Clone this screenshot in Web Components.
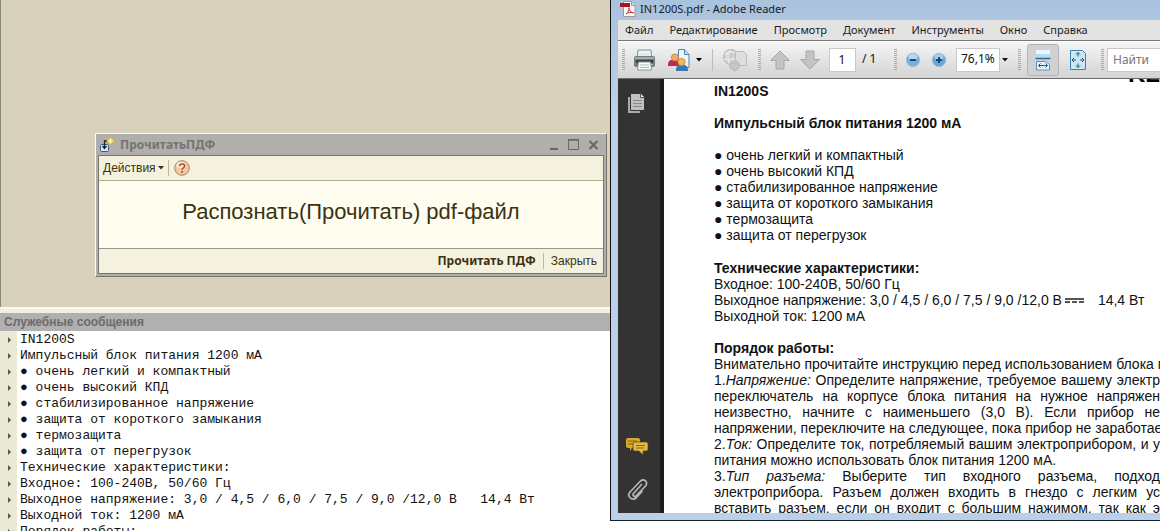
<!DOCTYPE html>
<html lang="ru">
<head>
<meta charset="utf-8">
<title>Прочитать ПДФ</title>
<style>
  html, body { margin: 0; height: 100%; overflow: hidden; background: #fff; }
  body { font-family: "Liberation Sans", Arial, sans-serif; color: #111; }
</style>
</head>
<body>
<split-desktop>
  <onec-app slot="left"></onec-app>
  <reader-window slot="right"></reader-window>
</split-desktop>

<script>
const define = (name, css, html, setup) => {
  const tpl = document.createElement('template');
  tpl.innerHTML = `<style>*{box-sizing:border-box}${css}</style>${html}`;
  customElements.define(name, class extends HTMLElement {
    constructor() {
      super();
      this.attachShadow({ mode: 'open' }).append(tpl.content.cloneNode(true));
    }
    connectedCallback() { if (setup) setup(this, this.shadowRoot); }
  });
};

const ICONS = {
  form: [16, 16, `<rect x="1.5" y="7.500" width="8" height="7" rx="1" fill="#d7e7f6" stroke="#2f5f92"/><path d="M9 4H5.500v7M3.500 9l2 2.500 2-2.500" fill="none" stroke="#222" stroke-width="1.300"/><path d="M11.500 0L15.500 4l-4 4-4-4z" fill="#f4dc4c" stroke="#c9a92c" stroke-width=".7"/><path d="M11.500 2v4M9.500 4h4" stroke="#fff8bb"/>`],
  help: [16, 16, `<circle cx="8" cy="8" r="7.300" fill="#f5c79b" stroke="#a98468"/><ellipse cx="7" cy="5" rx="4.500" ry="3.200" fill="#fde8cf"/><path d="M5.600 6.200c0-3.200 5-3 5-.2 0 1.700-2.500 1.800-2.500 3.800" fill="none" stroke="#8c4f2c" stroke-width="1.400"/><rect x="7.200" y="11" width="1.700" height="1.700" fill="#8c4f2c"/>`],
  min: [12, 12, `<path d="M2 10h8" stroke="#666" stroke-width="2"/>`],
  max: [12, 12, `<path d="M.5.5h10v10H.5z" fill="none" stroke="#666"/><path d="M0 1h11" stroke="#666" stroke-width="1.500"/>`],
  close: [12, 12, `<path d="M1.500 2l8 8M9.500 2l-8 8" stroke="#666" stroke-width="2"/>`],
  caret: [6, 4, `<path d="M0 0h6L3 3.500z" fill="currentColor"/>`],
  pdf: [16, 16, `<path d="M3.500.5h8l3.500 4v11H3.500z" fill="#fafafa" stroke="#999"/><path d="M11.500.5v4H15" fill="#ddd" stroke="#999"/><path d="M0 2h10v4H0z" fill="#a8141c"/><path d="M6 13c2-1.500 3.500-4.500 3-6.500M9 7.500c.5 2.500 2 4 4.500 4.300M6 13c1.500-1.500 5-2 7.500-1.200" fill="none" stroke="#cf2b2b"/>`],
  printer: [24, 24, `<path d="M5 2h13l1 8H4z" fill="#dcebee" stroke="#8b9498"/><path d="M6 4h11" stroke="#fff"/><rect x="1" y="8" width="21" height="11" rx="2" fill="#727b80"/><path d="M2 10h19" stroke="#a4adb0" stroke-width="2"/><rect x="3" y="12" width="17" height="3" fill="#394045"/><path d="M5.500 14h12l1 8h-14z" fill="#fafcfc" stroke="#8b9498"/><path d="M7 17h9M7 19.500h9" stroke="#aeb6b9"/><rect x="18" y="16" width="2" height="1" fill="#8fe08a"/>`],
  people: [24, 24, `<path d="M11.500 1.500h6l4.500 5v13H11.500z" fill="#eef6fd" stroke="#4387bf"/><path d="M17.500 1.500v5H22" fill="#b8d9f2" stroke="#4387bf"/><path d="M1 18c0-6 2-6 5.500-6s5.500 0 5.500 6z" fill="#c5264a"/><circle cx="8" cy="9.500" r="3.600" fill="#f0a96a" stroke="#b9713b" stroke-width=".7"/><path d="M9 23c0-6 2.500-6 6-6s6 0 6 6z" fill="#3578b8"/><circle cx="14.500" cy="14" r="3.700" fill="#f2b95a" stroke="#b97b2b" stroke-width=".7"/>`],
  globe: [26, 24, `<circle cx="9" cy="9" r="7.500" fill="#cdcdcd" stroke="#b3b3b3"/><path d="M3 7c3-4 8-3 11-2M2 11c4 1 8 1 12-1M8 2c-3 5-3 9 0 14" fill="none" stroke="#e9e9e9" stroke-width="1.500"/><path d="M13.500 3.500h8l3 3v11h-11z" fill="#dedede" stroke="#bbb"/><path d="M8 15h4l2-2 3 2v5l-4 3-5-3z" fill="#c6c6c6" stroke="#b5b5b5"/>`],
  up: [22, 22, `<path d="M11 2l9.500 9.500H15V20H7v-8.500H1.500z" fill="#c3c4c5" stroke="#a5a6a7"/>`],
  down: [22, 22, `<path d="M11 20l9.500-9.500H15V2H7v8.500H1.500z" fill="#c3c4c5" stroke="#a5a6a7"/>`],
  minus: [16, 16, `<circle cx="8" cy="8" r="6.700" fill="#72b3de" stroke="#a9bccb"/><ellipse cx="8" cy="5" rx="4.500" ry="3" fill="#b4daf1"/><path d="M5 8h6" stroke="#164a78" stroke-width="2"/>`],
  plus: [16, 16, `<circle cx="8" cy="8" r="6.700" fill="#62a9da" stroke="#a9bccb"/><ellipse cx="8" cy="5" rx="4.500" ry="3" fill="#a4d0ec"/><path d="M5 8h6M8 5v6" stroke="#164a78" stroke-width="2"/>`],
  width: [18, 22, `<path d="M2 1h14v8H2z" fill="#eaf6fd"/><path d="M2 5h14v4H2z" fill="#b8dcf0"/><path d="M1.500 9.500h15" stroke="#2f6c9a" stroke-width="1.500"/><path d="M2.500 21V12.500h9l4 3V21z" fill="#e3f2fb" stroke="#5e93b8"/><path d="M4.500 16.500h9M6.500 14.500l-2 2 2 2M11.500 14.500l2 2-2 2" fill="none" stroke="#23587f"/>`],
  fit: [18, 22, `<path d="M1.500 1.500h12l3 3v16h-15z" fill="#cce6f5" stroke="#3e83b3"/><path d="M9 3.500v4M7 5.500l2-2 2 2M9 18.500v-4M7 16.500l2 2 2-2M3 11h4M5 9l-2 2 2 2M15 11h-4M13 9l2 2-2 2" fill="none" stroke="#23587f"/>`],
  pages: [20, 22, `<path d="M1 5h10v16H1z" fill="#a9abab"/><path d="M1 5h3v14h9v2H1z" fill="#a9abab"/><path d="M3.500 1.500h10l4 4v13h-14z" fill="#bfc1c1" stroke="#333"/><path d="M13.500 1.500v4h4" fill="#eee" stroke="#555"/><path d="M6 8.500h9M6 11.500h9M6 14.500h9" stroke="#8a8a8a"/>`],
  notes: [24, 20, `<path d="M3 1h10q2 0 2 2v6q0 2-2 2H7l-2 3v-3H3q-2 0-2-2V3q0-2 2-2z" fill="#d9a829"/><path d="M3 4h9M3 7h5" stroke="#87640f"/><path d="M10 5h11q2 0 2 2v5q0 2-2 2h-3v4l-4-4h-4q-2 0-2-2V7q0-2 2-2z" fill="#e3bb48" stroke="#5f4b18" stroke-width=".8"/><path d="M11 8.500h9M11 11h8" stroke="#87640f"/>`],
  clip: [22, 24, `<path d="M16 7L7.500 16.500c-1.500 2 1 4 3 2L19.500 9c3-4-1.500-8-5-5L4 15c-3.500 4.500 2 9.500 6.500 5.500l6-6.500" fill="none" stroke="#b5b7b7" stroke-width="1.700"/>`]
};

define('ui-icon', `:host{display:inline-flex;flex:none} svg{display:block}`, ``, (el, root) => {
  const [w, h, body] = ICONS[el.getAttribute('name')];
  const box = document.createElement('div');
  box.innerHTML = `<svg aria-hidden="true" width="${w}" height="${h}" viewBox="0 0 ${w} ${h}">${body}</svg>`;
  root.append(box.firstChild);
});

define('split-desktop', `
  :host{display:grid;grid-template-columns:61fr 55fr;height:100vh;overflow:hidden;background:#fff}
  .cell{min-width:0;min-height:0;display:grid}
`, `<div class="cell"><slot name="left"></slot></div><div class="cell"><slot name="right"></slot></div>`);

define('onec-dialog', `
  :host{display:block;border:1px solid #fbfaf0;border-right-color:#77746c;border-bottom-color:#77746c;background:#b0afad;padding:0 2px 2px 2px;color:#3b3210;font-family:"Liberation Sans",Arial,sans-serif}
  header{display:flex;align-items:center;height:21px;gap:5px;padding:0 4px 0 1px}
  h1{flex:1;margin:0;font:bold 12px/20px "Noto Sans",sans-serif;color:#75746f}
  button{border:0;background:none;padding:0;margin:0;display:inline-flex;align-items:center;color:inherit;font:12px/20px "Liberation Sans",Arial,sans-serif}
  .win{display:flex;gap:8px}
  .body{border:1px solid #77746c}
  .bar{display:flex;align-items:center;height:24px;padding:0 4px;background:#f4f1df}
  .bar button{gap:2px}
  .bar i,footer i{width:1px;height:16px;background:#bdb89c}
  .bar i{margin:0 5px 0 4px}
  .main{height:69px;border-top:1px solid #b1ad97;border-bottom:1px solid #9a9788;background:#fffcf0;text-align:center;font-size:22px;line-height:62px;margin:0}
  footer{display:flex;align-items:center;justify-content:flex-end;gap:7px;height:24px;padding:0 6px;background:#f4f1df}
  footer .default{font:bold 12px/20px "Noto Sans",sans-serif}
`, `
  <header><ui-icon name="form"></ui-icon><h1>ПрочитатьПДФ</h1>
    <div class="win">
      <button aria-label="Свернуть"><ui-icon name="min"></ui-icon></button>
      <button aria-label="Развернуть"><ui-icon name="max"></ui-icon></button>
      <button aria-label="Закрыть окно"><ui-icon name="close"></ui-icon></button>
    </div></header>
  <div class="body">
    <div class="bar"><button>Действия<ui-icon name="caret"></ui-icon></button><i></i><button aria-label="Справка"><ui-icon name="help"></ui-icon></button></div>
    <p class="main">Распознать(Прочитать) pdf-файл</p>
    <footer><button class="default">Прочитать ПДФ</button><i></i><button>Закрыть</button></footer>
  </div>`);

define('message-log', `
  :host{display:flex;flex-direction:column;min-height:0;overflow:hidden;border-top:2px solid #fbf9ee;background:#fff}
  h2{flex:none;margin:0;border-top:4px solid #f3efdf;background:#b1afb0;color:#6c6b6b;font:bold 12px/18px "Liberation Sans",Arial,sans-serif;padding:0 4px}
  ul{flex:1;margin:0;padding:1px 0 0;list-style:none;background:linear-gradient(90deg,#ece8d6 17px,#fff 17px);font:13px/16px "Liberation Mono","Courier New",monospace;color:#111;white-space:pre}
  li{display:flex;align-items:center;height:16px}
  li::before{content:"";flex:none;width:0;height:0;margin:0 9px 0 8px;border:3px solid transparent;border-left-color:#555;border-right-width:0}
`, `<h2>Служебные сообщения</h2><ul></ul>`, (el, root) => {
  const lines = ['IN1200S', 'Импульсный блок питания 1200 мА', '● очень легкий и компактный', '● очень высокий КПД',
    '● стабилизированное напряжение', '● защита от короткого замыкания', '● термозащита', '● защита от перегрузок',
    'Технические характеристики:', 'Входное: 100-240В, 50/60 Гц',
    'Выходное напряжение: 3,0 / 4,5 / 6,0 / 7,5 / 9,0 /12,0 В   14,4 Вт', 'Выходной ток: 1200 мА', 'Порядок работы:'];
  root.querySelector('ul').replaceChildren(...lines.map(t => Object.assign(document.createElement('li'), { textContent: t })));
});

define('onec-app', `
  :host{display:flex;flex-direction:column;min-width:0;min-height:0}
  .work{flex:none;background:#d8d2bd;border-left:1px solid #8b887c;padding:133px 3px 30px 94px}
  message-log{flex:1}
`, `<div class="work"><onec-dialog></onec-dialog></div><message-log></message-log>`);

define('reader-menu', `
  :host{display:block;background:#e4e3e4;border-bottom:1px solid #777}
  nav{display:flex;gap:16px;height:20px;padding:0 7px;overflow:hidden}
  button{border:0;background:none;padding:0;font:11px/18px "Noto Sans",sans-serif;color:#1b1b1b}
`, `<nav><button>Файл</button><button>Редактирование</button><button>Просмотр</button><button>Документ</button><button>Инструменты</button><button>Окно</button><button>Справка</button></nav>`);

define('reader-toolbar', `
  :host{display:grid;grid-template-columns:10px 34px 44px 12px 34px 14px 28px 32px 32px 32px 10px 26px 26px 60px 15px 32px 38px 10px 1fr;align-items:center;justify-items:center;height:38px;border-top:1px solid #fff;border-bottom:1px solid #6d6d6d;background:linear-gradient(#f5f5f5,#d3d3d4);font:12px/18px "Noto Sans",sans-serif;color:#111;overflow:hidden}
  button{border:0;background:none;padding:0;display:flex;align-items:center;gap:5px}
  .grip{width:3px;height:22px;background:repeating-linear-gradient(#aaa 0 1px,transparent 1px 2px)}
  .sep{width:1px;height:22px;background:#bbb}
  input,select{height:24px;border:1px solid #c9c9c9;background:#fff;font:12px/18px "Noto Sans",sans-serif;color:#111;border-radius:0;margin:0;padding:0 0 2px}
  .page{width:27px;text-align:center}
  .of{justify-self:start;padding:0 4px 2px}
  .zoom{width:52px;display:flex;align-items:center;gap:2px}
  select{appearance:none;width:44px;padding:0 4px 2px}
  .on{width:32px;height:32px;justify-content:center;border:1px solid #b4b4b4;border-radius:3px;background:#d0d1d2}
  .find{justify-self:stretch;width:100%;padding:0 5px 2px;border-right:0}
  .find::placeholder{color:#777;opacity:1}
`, `
  <span class="grip"></span>
  <button aria-label="Печать"><ui-icon name="printer"></ui-icon></button>
  <button aria-label="Совместная работа"><ui-icon name="people"></ui-icon><ui-icon name="caret"></ui-icon></button>
  <span class="sep"></span>
  <button aria-label="Отправить"><ui-icon name="globe"></ui-icon></button>
  <span class="grip"></span>
  <button aria-label="Предыдущая страница"><ui-icon name="up"></ui-icon></button>
  <button aria-label="Следующая страница"><ui-icon name="down"></ui-icon></button>
  <input class="page" aria-label="Страница" value="1">
  <span class="of">/ 1</span>
  <span class="grip"></span>
  <button aria-label="Уменьшить"><ui-icon name="minus"></ui-icon></button>
  <button aria-label="Увеличить"><ui-icon name="plus"></ui-icon></button>
  <div class="zoom"><select aria-label="Масштаб"><option>76,1%</option></select><ui-icon name="caret"></ui-icon></div>
  <span class="grip"></span>
  <button class="on" aria-label="По ширине"><ui-icon name="width"></ui-icon></button>
  <button aria-label="Страница целиком"><ui-icon name="fit"></ui-icon></button>
  <span class="grip"></span>
  <input class="find" aria-label="Найти" placeholder="Найти">`);

define('reader-sidebar', `
  :host{display:flex;flex-direction:column;align-items:center;gap:20px;background:#333;border-right:4px solid #1d1d1d;padding:13px 4px 12px 0}
  button{border:0;background:none;padding:0;display:flex}
  .gap{flex:1}
`, `<button aria-label="Страницы"><ui-icon name="pages"></ui-icon></button><span class="gap"></span>
  <button aria-label="Комментарии"><ui-icon name="notes"></ui-icon></button>
  <button aria-label="Вложения"><ui-icon name="clip"></ui-icon></button>`);

define('pdf-page', `
  :host{display:block;position:relative;min-width:0;overflow:hidden;background:#fff;padding:4px 0 0 50px;font:14px/16px "Liberation Sans",Arial,sans-serif;color:#111}
  h1,h2,p,ul{margin:0 0 16px;padding:0;font-size:14px;line-height:16px;white-space:nowrap}
  h2{margin:0}
  ul{list-style:none;margin-bottom:17px}
  .j span{display:block;text-align:justify;text-align-last:justify}
  .j .l{text-align-last:left}
  .dc{display:inline-block;width:19px;height:5px;margin:0 14px 0 3px;vertical-align:2px;border-top:2px solid #555;background:repeating-linear-gradient(90deg,#555 0 5px,transparent 5px 7px) bottom/100% 2px no-repeat}
  .logo{position:absolute;right:0;top:-15px;font:bold 24px/20px "Liberation Sans",Arial,sans-serif;color:#000}
`, `
  <div class="logo">KL</div>
  <h1>IN1200S</h1>
  <h1>Импульсный блок питания 1200 мА</h1>
  <ul><li>● очень легкий и компактный</li><li>● очень высокий КПД</li><li>● стабилизированное напряжение</li><li>● защита от короткого замыкания</li><li>● термозащита</li><li>● защита от перегрузок</li></ul>
  <h2>Технические характеристики:</h2>
  <p>Входное: 100-240В, 50/60 Гц<br>Выходное напряжение: 3,0 / 4,5 / 6,0 / 7,5 / 9,0 /12,0 В<i class="dc"></i>14,4 Вт<br>Выходной ток: 1200 мА</p>
  <h2>Порядок работы:</h2>
  <p class="j"><span>Внимательно прочитайте инструкцию перед использованием блока п</span>
  <span>1.<em>Напряжение:</em> Определите напряжение, требуемое вашему электр</span>
  <span>переключатель на корпусе блока питания на нужное напряжен</span>
  <span>неизвестно, начните с наименьшего (3,0 В). Если прибор не</span>
  <span>напряжении, переключите на следующее, пока прибор не заработае</span>
  <span>2.<em>Ток:</em> Определите ток, потребляемый вашим электроприбором, и у</span>
  <span class="l">питания можно использовать блок питания 1200 мА.</span>
  <span>3.<em>Тип разъема:</em> Выберите тип входного разъема, подход</span>
  <span>электроприбора. Разъем должен входить в гнездо с легким ус</span>
  <span>вставить разъем, если он входит с большим нажимом, так как э</span></p>`);

define('reader-window', `
  :host{display:flex;flex-direction:column;min-width:0;min-height:0;margin-bottom:10px;border-left:1px solid #111;border-bottom:1px solid #14222c;background:linear-gradient(#a9c2de,#bcd0e8 110px,#bccfe8);padding:0 0 7px 7px}
  header{flex:none;display:flex;align-items:center;gap:4px;height:20px;padding:0 2px 2px;font:11px/18px "Noto Sans",sans-serif;color:#15202c;overflow:hidden}
  reader-menu,reader-toolbar{flex:none}
  .view{flex:1;min-height:0;display:grid;grid-template-columns:46px 1fr;overflow:hidden}
`, `
  <header><ui-icon name="pdf"></ui-icon><span>IN1200S.pdf - Adobe Reader</span></header>
  <reader-menu></reader-menu><reader-toolbar></reader-toolbar>
  <div class="view"><reader-sidebar></reader-sidebar><pdf-page></pdf-page></div>`);
</script>
</body>
</html>
